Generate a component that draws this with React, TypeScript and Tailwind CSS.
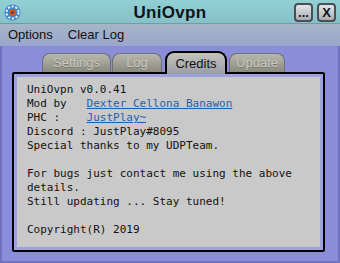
import React from "react";

const LINES: React.ReactNode[] = [
  "UniOvpn v0.0.41",
  <>
    {"Mod by   "}
    <span className="text-[#1f5fae] underline">Dexter Cellona Banawon</span>
  </>,
  <>
    {"PHC :    "}
    <span className="text-[#1f5fae] underline">JustPlay~</span>
  </>,
  "Discord : JustPlay#8095",
  "Special thanks to my UDPTeam.",
  "",
  "For bugs just contact me using the above",
  "details.",
  "Still updating ... Stay tuned!",
  "",
  "Copyright(R) 2019",
];

function AppIcon() {
  return (
    <svg width="17" height="17" viewBox="0 0 17 17">
      <circle cx="8.5" cy="8.5" r="8" fill="#3f86cc" />
      <circle cx="8.5" cy="8.5" r="6" fill="none" stroke="#e8f2fb" strokeWidth="2" strokeDasharray="2.2 1.6" />
      <circle cx="8.5" cy="8.5" r="3.4" fill="#c9582e" />
      <circle cx="8.5" cy="8.5" r="1.6" fill="#8b3b22" />
    </svg>
  );
}

function WinButton({ label }: { label: string }) {
  return (
    <div className="w-[19px] h-[19px] rounded-[4px] border-2 border-[#4a4f55] bg-gradient-to-b from-[#e4e6e8] to-[#a9adb2] flex items-center justify-center text-[13px] font-bold leading-none text-[#111]">
      {label}
    </div>
  );
}

function Tab({ label, active }: { label: string; active?: boolean }) {
  if (active) {
    return (
      <div className="relative z-10 -mb-[2px] h-[23px] w-[62px] rounded-t-[9px] border-2 border-b-0 border-black bg-gradient-to-b from-[#c4c4bc] to-[#9c9ca8] flex items-center justify-center text-[13px] text-[#111]">
        {label}
      </div>
    );
  }
  return (
    <div className="mt-[2px] h-[19px] rounded-t-[8px] border border-b-0 border-[#6e7078] bg-gradient-to-b from-[#b8b8ae] to-[#8a8a80] flex items-center justify-center text-[13px] text-[#c9c9c0] [text-shadow:0_1px_0_#7a7a72]">
      {label}
    </div>
  );
}

export default function App() {
  return (
    <div className="w-[340px] h-[263px] flex flex-col overflow-hidden font-['Liberation_Sans',Arial,sans-serif] bg-[#8a8ed8]">
      <div className="h-[24px] grid grid-cols-[1fr_auto_1fr] items-center bg-gradient-to-b from-[#92d0d4] to-[#86c0c8] border-b border-[#6c9eaa]">
        <div className="pl-[4px] flex items-center">
          <AppIcon />
        </div>
        <div className="text-[17px] font-bold text-[#101418] tracking-[0.3px]">UniOvpn</div>
        <div className="flex justify-end gap-[4px] pr-[4px]">
          <WinButton label="..." />
          <WinButton label="X" />
        </div>
      </div>

      <div className="h-[22px] flex items-center gap-[15px] pl-[8px] bg-gradient-to-b from-[#a4b6c6] to-[#9aa6cc] text-[13px] text-[#111]">
        <span>Options</span>
        <span>Clear Log</span>
      </div>

      <div className="flex-1 flex flex-col pl-[10px] pr-[13px] pt-[3px] border-x-2 border-b-2 border-[#6f72c0]">
        <div className="flex items-end h-[23px] pl-[30px] gap-[1px]">
          <div className="w-[69px]">
            <Tab label="Settings" />
          </div>
          <div className="w-[50px]">
            <Tab label="Log" />
          </div>
          <div className="ml-[2px]">
            <Tab label="Credits" active />
          </div>
          <div className="w-[56px] ml-[1px]">
            <Tab label="Update" />
          </div>
        </div>
        <div className="h-[180px] border-2 border-black rounded-[2px] p-[3px] bg-[#9ea1e0]">
          <div className="h-full bg-[#c9c9c9] pl-[10px] pt-[6px] font-['DejaVu_Sans_Mono',monospace] text-[11px] leading-[14px] text-[#111] whitespace-pre">
            {LINES.map((l, i) => (
              <div key={i} className="h-[14px]">
                {l}
              </div>
            ))}
          </div>
        </div>
      </div>
    </div>
  );
}
